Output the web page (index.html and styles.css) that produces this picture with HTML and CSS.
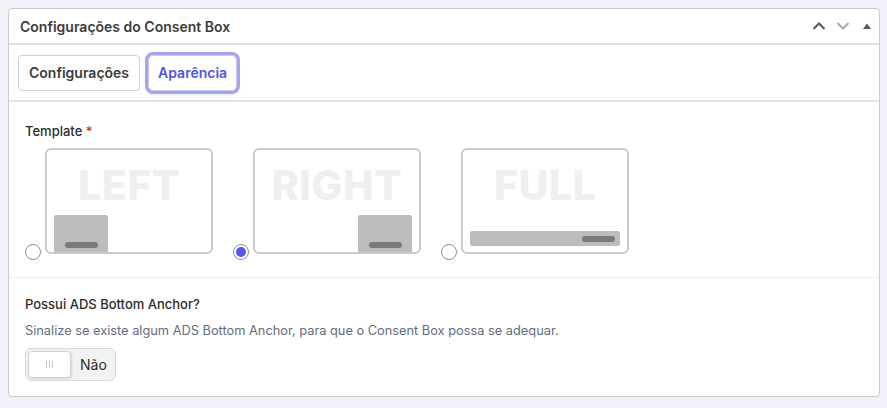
FILE: index.html
```html
<!DOCTYPE html>
<html lang="pt-BR">
<head>
    <meta charset="UTF-8">
    <title>Configurações do Consent Box</title>
    <link rel="stylesheet" href="styles.css">
</head>
<body>
    <div class="postbox">
        <div class="postbox-header">
            <h2 class="postbox-title">Configurações do Consent Box</h2>
            <div class="handle-actions">
                <svg class="handle up" width="14" height="10" viewBox="0 0 14 10"><path d="M1.5 8 L7 2.5 L12.5 8" fill="none" stroke="#50575e" stroke-width="2"/></svg>
                <svg class="handle down" width="14" height="10" viewBox="0 0 14 10"><path d="M1.5 2 L7 7.5 L12.5 2" fill="none" stroke="#a7aaad" stroke-width="2"/></svg>
                <svg class="handle toggle" width="10" height="8" viewBox="0 0 10 8"><path d="M1 7 L5 1.5 L9 7 Z" fill="#50575e"/></svg>
            </div>
        </div>

        <div class="tabs">
            <button class="tab">Configurações</button>
            <button class="tab active">Aparência</button>
        </div>

        <div class="field">
            <label class="field-label">Template <span class="required">*</span></label>
            <div class="templates">
                <label class="template">
                    <span class="radio"></span>
                    <span class="preview">
                        <span class="preview-word">LEFT</span>
                        <span class="box box-left"><span class="bar"></span></span>
                    </span>
                </label>
                <label class="template">
                    <span class="radio checked"></span>
                    <span class="preview">
                        <span class="preview-word">RIGHT</span>
                        <span class="box box-right"><span class="bar"></span></span>
                    </span>
                </label>
                <label class="template">
                    <span class="radio"></span>
                    <span class="preview">
                        <span class="preview-word">FULL</span>
                        <span class="strip"><span class="bar"></span></span>
                    </span>
                </label>
            </div>
        </div>

        <div class="field field-last">
            <label class="field-label">Possui ADS Bottom Anchor?</label>
            <p class="field-desc">Sinalize se existe algum ADS Bottom Anchor, para que o Consent Box possa se adequar.</p>
            <div class="switch">
                <span class="knob"><span class="grip"></span><span class="grip"></span><span class="grip"></span></span>
                <span class="switch-text">Não</span>
            </div>
        </div>
    </div>
</body>
</html>
```

FILE: styles.css
```css
* {
    margin: 0;
    padding: 0;
    box-sizing: border-box;
}

body {
    font-family: Inter, "Noto Sans", sans-serif;
    background: #f1f1fa;
    padding: 8px;
    color: #1e1e1e;
}

.postbox {
    width: 872px;
    background: #fff;
    border: 1px solid #c9cad0;
    border-radius: 4px;
    height: 389px;
}

.postbox-header {
    display: flex;
    align-items: center;
    justify-content: space-between;
    height: 36px;
    padding: 0 7px 0 11px;
    border-bottom: 2px solid #e2e2e4;
}

.postbox-title {
    font-size: 14px;
    font-weight: 600;
    color: #3c3c3c;
}

.handle-actions {
    display: flex;
    align-items: center;
    gap: 10px;
}

.handle.toggle {
    margin-left: 2px;
}

.tabs {
    display: flex;
    align-items: center;
    gap: 8px;
    height: 57px;
    padding: 0 9px;
    border-bottom: 2px solid #e2e2e4;
}

.tab {
    font-family: inherit;
    font-size: 14px;
    font-weight: 600;
    color: #3c3c3c;
    background: #fff;
    border: 1px solid #d0d0d4;
    border-radius: 4px;
    height: 36px;
    padding: 0 10px;
    cursor: pointer;
}

.tab.active {
    color: #5252ea;
    border-color: #c8c8f5;
    box-shadow: 0 0 0 3px #a3a4f3, 0 6px 6px rgba(0, 0, 0, 0.06);
    border-radius: 5px;
    padding: 0 9px;
}

.field {
    padding: 19px 16px 0;
    border-bottom: 1px solid #ececee;
    height: 176px;
}

.field-last {
    border-bottom: none;
    height: auto;
    padding-top: 16px;
}

.field-label {
    display: block;
    font-size: 13px;
    font-weight: 500;
    color: #2c2c2c;
    line-height: 20px;
}

.required {
    color: #e0201a;
}

.templates {
    display: flex;
    gap: 20px;
    margin-top: 7px;
}

.template {
    display: flex;
    align-items: flex-end;
    gap: 4px;
    cursor: pointer;
}

.radio {
    width: 16px;
    height: 16px;
    border: 1px solid #8c8f94;
    border-radius: 50%;
    margin-bottom: -6px;
    display: flex;
    align-items: center;
    justify-content: center;
}

.radio.checked::after {
    content: "";
    width: 10px;
    height: 10px;
    border-radius: 50%;
    background: #5656f0;
}

.preview {
    position: relative;
    width: 168px;
    height: 106px;
    border: 2px solid #cacaca;
    border-radius: 6px;
    overflow: hidden;
    display: flex;
    justify-content: center;
}

.preview-word {
    font-size: 41px;
    font-weight: 800;
    color: #efefef;
    margin-top: 13px;
    line-height: 44px;
    letter-spacing: 0.5px;
}

.box {
    position: absolute;
    bottom: 0;
    width: 54px;
    height: 37px;
    background: #bcbcbc;
    border-radius: 2px 2px 0 0;
    display: flex;
    justify-content: center;
    align-items: flex-end;
    padding-bottom: 4px;
}

.box-left {
    left: 7px;
}

.box-right {
    right: 7px;
}

.bar {
    width: 33px;
    height: 6px;
    border-radius: 3px;
    background: #7a7a7a;
}

.strip {
    position: absolute;
    left: 7px;
    right: 7px;
    bottom: 6px;
    height: 15px;
    background: #bcbcbc;
    border-radius: 2px;
    display: flex;
    justify-content: flex-end;
    align-items: center;
    padding-right: 5px;
}

.field-desc {
    font-size: 12.8px;
    color: #646b7e;
    margin-top: 7px;
    line-height: 20px;
}

.switch {
    display: inline-flex;
    align-items: center;
    margin-top: 7px;
    height: 33px;
    width: 91px;
    padding: 2px;
    background: #f2f2f3;
    border: 1px solid #d9d9dc;
    border-radius: 6px;
}

.knob {
    display: flex;
    align-items: center;
    justify-content: center;
    gap: 2px;
    width: 43px;
    height: 27px;
    background: #fff;
    border: 1px solid #d3d3d6;
    border-radius: 4px;
    box-shadow: 1px 1px 2px rgba(0, 0, 0, 0.12);
}

.grip {
    width: 1px;
    height: 7px;
    background: #c4c4c8;
}

.switch-text {
    margin-left: 9px;
    font-size: 14px;
    color: #2c2c2c;
}
```
